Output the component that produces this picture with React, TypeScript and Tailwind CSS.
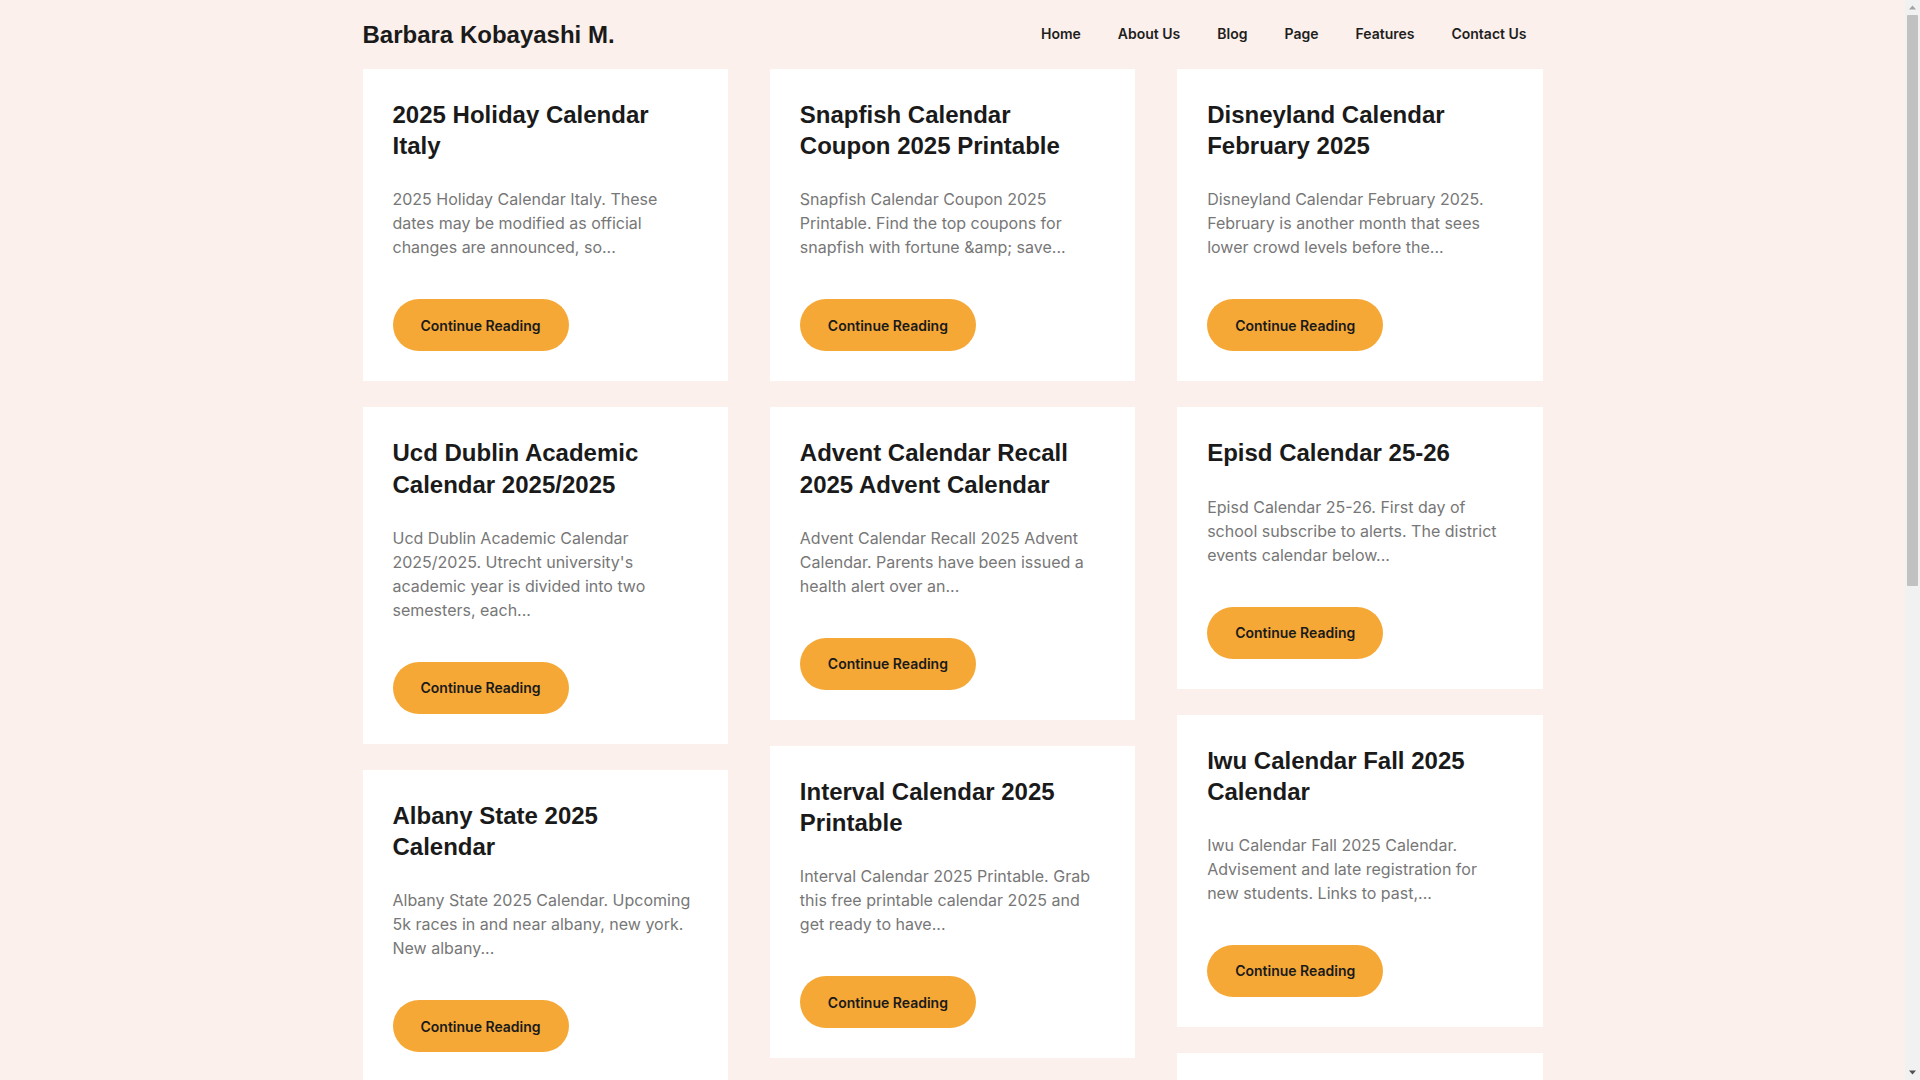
const posts = [
  [
    {
      title: "2025 Holiday Calendar Italy",
      excerpt:
        "2025 Holiday Calendar Italy. These dates may be modified as official changes are announced, so...",
    },
    {
      title: "Ucd Dublin Academic Calendar 2025/2025",
      excerpt:
        "Ucd Dublin Academic Calendar 2025/2025. Utrecht university's academic year is divided into two semesters, each...",
    },
    {
      title: "Albany State 2025 Calendar",
      excerpt:
        "Albany State 2025 Calendar. Upcoming 5k races in and near albany, new york. New albany...",
    },
  ],
  [
    {
      title: "Snapfish Calendar Coupon 2025 Printable",
      excerpt:
        "Snapfish Calendar Coupon 2025 Printable. Find the top coupons for snapfish with fortune &amp; save...",
    },
    {
      title: "Advent Calendar Recall 2025 Advent Calendar",
      excerpt:
        "Advent Calendar Recall 2025 Advent Calendar. Parents have been issued a health alert over an...",
    },
    {
      title: "Interval Calendar 2025 Printable",
      excerpt:
        "Interval Calendar 2025 Printable. Grab this free printable calendar 2025 and get ready to have...",
    },
    {
      title: "Uf Academic Calendar Spring 2025",
      excerpt:
        "Uf Academic Calendar Spring 2025. The university calendar lists important dates for the...",
    },
  ],
  [
    {
      title: "Disneyland Calendar February 2025",
      excerpt:
        "Disneyland Calendar February 2025. February is another month that sees lower crowd levels before the...",
    },
    {
      title: "Episd Calendar 25-26",
      excerpt:
        "Episd Calendar 25-26. First day of school subscribe to alerts. The district events calendar below...",
    },
    {
      title: "Iwu Calendar Fall 2025 Calendar",
      excerpt:
        "Iwu Calendar Fall 2025 Calendar. Advisement and late registration for new students. Links to past,...",
    },
    {
      title: "Lunar Calendar 2025 Printable",
      excerpt:
        "Lunar Calendar 2025 Printable. Keep track of every new moon and full moon during the...",
    },
  ],
];

const nav = ["Home", "About Us", "Blog", "Page", "Features", "Contact Us"];

function PostCard({ title, excerpt }: { title: string; excerpt: string }) {
  return (
    <article className="bg-white p-[30px]">
      <h2 className="mb-[26px] font-['Liberation_Sans',Arial,sans-serif] text-[24px] font-bold leading-[1.3] text-[#1a1a1a]">
        <a href="#">{title}</a>
      </h2>
      <p className="mb-[40px] font-['Inter',sans-serif] text-[16px] leading-[24px] text-[#777777]">
        {excerpt}
      </p>
      <a
        href="#"
        className="inline-flex h-[52px] items-center rounded-full bg-[#f5a836] px-[28px] font-['Inter',sans-serif] text-[14px] font-semibold text-[#1a1a1a]"
      >
        Continue Reading
      </a>
    </article>
  );
}

// the page scrollbar as it shows in the screenshot
function Scrollbar() {
  return (
    <div className="sticky top-0 flex h-screen w-[15px] shrink-0 flex-col items-center bg-[#f1f1f1]">
      <svg width="15" height="15" viewBox="0 0 15 15" className="shrink-0">
        <path d="M4 9.5 7.5 5.5 11 9.5Z" fill="#a3a3a3" />
      </svg>
      <div className="h-[571px] w-[11px] rounded-[1px] bg-[#c1c1c1]" />
      <div className="flex-1" />
      <svg width="15" height="15" viewBox="0 0 15 15" className="shrink-0">
        <path d="M4 5.5 7.5 9.5 11 5.5Z" fill="#505050" />
      </svg>
    </div>
  );
}

export default function App() {
  return (
    <div className="flex min-h-screen bg-[#fbf0eb]">
      <div className="min-w-0 flex-1">
        <header className="mx-auto flex h-[69px] w-[1180px] items-center justify-between">
          <a
            href="#"
            className="font-['Liberation_Sans',Arial,sans-serif] text-[24px] font-bold text-[#1a1a1a]"
          >
            Barbara Kobayashi M.
          </a>
          <nav className="pb-[2px]">
            <ul className="flex gap-[37px] pr-[16px] font-['Inter',sans-serif] text-[14px] font-semibold text-[#1e1e1e]">
              {nav.map((item) => (
                <li key={item}>
                  <a href="#">{item}</a>
                </li>
              ))}
            </ul>
          </nav>
        </header>

        <main className="mx-auto grid w-[1180px] grid-cols-3 items-start gap-[42px] pb-10">
          {posts.map((column, i) => (
            <div key={i} className="flex flex-col gap-[26px]">
              {column.map((post) => (
                <PostCard key={post.title} {...post} />
              ))}
            </div>
          ))}
        </main>
      </div>
      <Scrollbar />
    </div>
  );
}
